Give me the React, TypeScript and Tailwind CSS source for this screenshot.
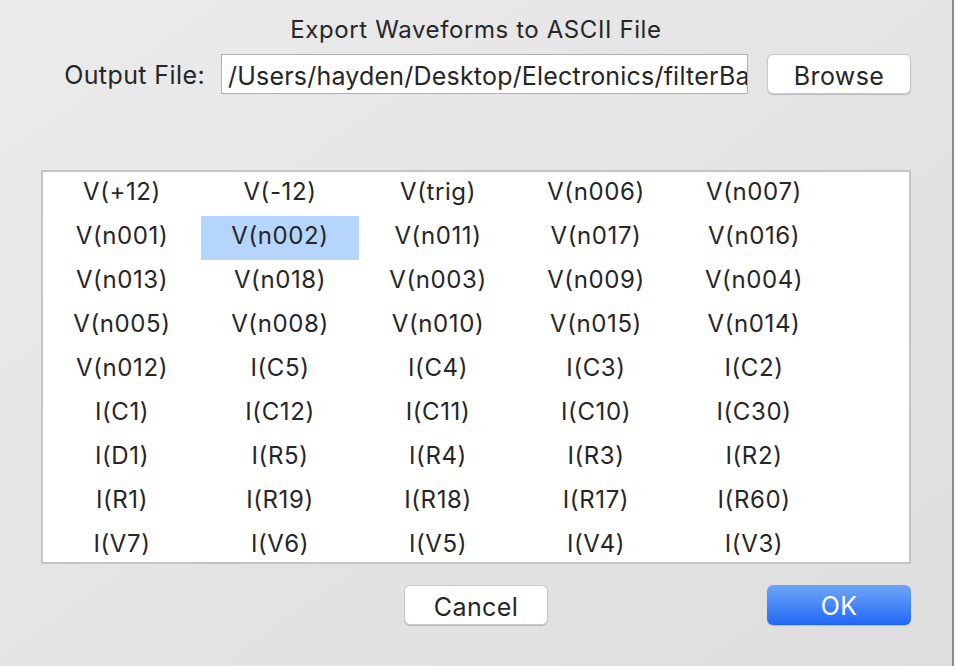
import React from "react";

const rows: string[][] = [
  ["V(+12)", "V(-12)", "V(trig)", "V(n006)", "V(n007)"],
  ["V(n001)", "V(n002)", "V(n011)", "V(n017)", "V(n016)"],
  ["V(n013)", "V(n018)", "V(n003)", "V(n009)", "V(n004)"],
  ["V(n005)", "V(n008)", "V(n010)", "V(n015)", "V(n014)"],
  ["V(n012)", "I(C5)", "I(C4)", "I(C3)", "I(C2)"],
  ["I(C1)", "I(C12)", "I(C11)", "I(C10)", "I(C30)"],
  ["I(D1)", "I(R5)", "I(R4)", "I(R3)", "I(R2)"],
  ["I(R1)", "I(R19)", "I(R18)", "I(R17)", "I(R60)"],
  ["I(V7)", "I(V6)", "I(V5)", "I(V4)", "I(V3)"],
];

export default function App() {
  return (
    <div
      className="w-[954px] h-[666px] overflow-hidden flex flex-col bg-gradient-to-br from-[#ebebeb] via-[#e4e4e4] to-[#dedede] border-r-2 border-[#8c8c8c] text-[#262626]"
      style={{ fontFamily: "Inter, 'Noto Sans', sans-serif" }}
    >
      <div className="h-[58px] pt-[15px] text-center text-[24px] leading-[30px] tracking-[0.6px]">
        Export Waveforms to ASCII File
      </div>
      <div className="flex items-center h-[40px] mt-[-4px]">
        <div className="w-[205px] text-right text-[25px] tracking-[0.4px] pt-[3px]">Output File:</div>
        <div className="ml-[16px] w-[527px] h-[40px] bg-white border border-[#b0b0b0] overflow-hidden whitespace-nowrap pl-[6px] pt-[2px] text-[25px] leading-[38px] tracking-[0.2px]">
          /Users/hayden/Desktop/Electronics/filterBank.txt
        </div>
        <button className="ml-[19px] w-[144px] h-[40px] pt-[3px] bg-white rounded-[6px] border border-[#c8c8c8] shadow-[0_1px_1px_rgba(0,0,0,0.18)] text-[25px] tracking-[0.4px]">
          Browse
        </button>
      </div>
      <div className="ml-[41px] mt-[76px] w-[870px] h-[394px] bg-white border-2 border-[#c4c4c4] overflow-hidden">
        {rows.map((r, i) => (
          <div key={i} className="flex h-[44px]">
            {r.map((c, j) => (
              <div
                key={j}
                className={
                  "w-[158px] h-[44px] flex items-center justify-center pb-[4px] text-[24px] tracking-[0.6px] " +
                  (i === 1 && j === 1 ? "bg-[#b5d5fd]" : "")
                }
              >
                {c}
              </div>
            ))}
          </div>
        ))}
      </div>
      <div className="flex mt-[21px] h-[40px]">
        <button className="ml-[404px] w-[144px] h-[40px] pt-[3px] bg-white rounded-[6px] border border-[#c8c8c8] shadow-[0_1px_1px_rgba(0,0,0,0.18)] text-[25px] tracking-[0.4px]">
          Cancel
        </button>
        <button className="ml-[219px] w-[144px] h-[40px] pt-[3px] rounded-[6px] bg-gradient-to-b from-[#6fa5f8] to-[#1f66f4] text-white text-[25px] tracking-[0.4px] shadow-[0_1px_1px_rgba(0,0,0,0.15)]">
          OK
        </button>
      </div>
    </div>
  );
}
